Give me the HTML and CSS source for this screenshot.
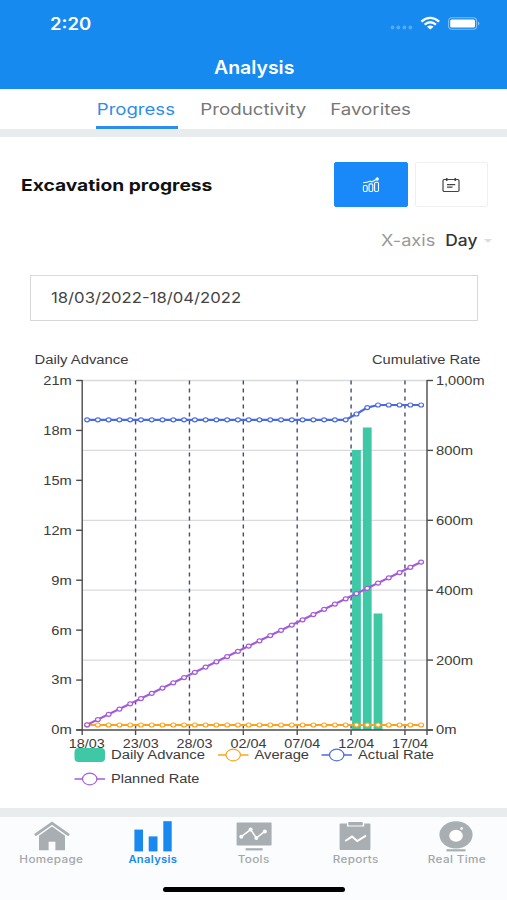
FILE: index.html
```html
<!DOCTYPE html>
<html lang="en">
<head>
  <meta charset="UTF-8" />
  <title>Analysis</title>
  <link rel="stylesheet" href="styles.css">
</head>
<body>

<header>
  <div class="status-bar">
    <span class="time wide">2:20</span>
    <svg class="status-icons" width="92" height="16" viewBox="0 0 92 16">
      <g fill="#fff" opacity=".28">
        <circle cx="3.5" cy="11.5" r="1.9" /><circle cx="9.3" cy="11.5" r="1.9" /><circle cx="15.4" cy="11.5" r="1.9" /><circle cx="21.3" cy="11.5" r="1.9" />
      </g>
      <g fill="none" stroke="#fff" stroke-width="2.3">
        <path d="M32.4 5.6Q41 -1.8 50.2 5.6" />
        <path d="M35.6 8.7Q41.3 3.9 47 8.7" />
      </g>
      <path d="M38 10.8Q41.3 8.2 44.6 10.8L41.3 13.6Z" fill="#fff" />
      <rect x="59.6" y="1.8" width="28" height="11.4" rx="3.2" fill="none" stroke="#fff" stroke-width="1.1" opacity=".45" />
      <rect x="61.2" y="3.4" width="24.8" height="8.2" rx="1.6" fill="#fff" />
      <path d="M89 5.5Q92 7.5 89 9.5Z" fill="#fff" opacity=".5" />
    </svg>
  </div>
  <h1><span class="wide">Analysis</span></h1>
</header>

<nav class="tabs">
  <a class="tab progress active"><span class="wide">Progress</span></a>
  <a class="tab productivity"><span class="wide">Productivity</span></a>
  <a class="tab favorites"><span class="wide">Favorites</span></a>
</nav>

<main>
  <div class="panel-head">
    <h2><span class="wide">Excavation progress</span></h2>
    <div class="view-switch">
      <button class="view-btn selected">
        <svg width="18" height="16" viewBox="0 0 18 16" fill="none" stroke="#fff" stroke-width="1.1">
          <rect x="1.4" y="8.5" width="3.8" height="6" rx="1.2" />
          <rect x="7" y="6.9" width="3.8" height="7.6" rx="1.2" />
          <rect x="12.6" y="5.2" width="3.9" height="9.3" rx="1.2" />
          <path d="M1.2 5.8Q5 5.4 8 4.2L10 4.8L15 2" />
          <circle cx="15.2" cy="2" r="1.1" fill="#fff" />
        </svg>
      </button>
      <button class="view-btn">
        <svg width="18" height="16" viewBox="0 0 18 16" fill="none" stroke="#444" stroke-width="1.2">
          <rect x="1" y="2.5" width="16" height="12" rx="1.2" />
          <path d="M4.7 .9V4M13.3 .9V4" stroke-width="1.6" />
          <path d="M5 7.6H13.2M5 10.2H10.5" />
        </svg>
      </button>
    </div>
  </div>

  <div class="axis-select">
    <span class="axis-label wide">X-axis</span>
    <span class="axis-value wide">Day</span>
    <i class="caret"></i>
  </div>

  <div class="date-range"><span class="wide">18/03/2022-18/04/2022</span></div>

  <svg id="chart" class="chart" width="507" height="460" viewBox="0 340 507 460"></svg>
</main>

<footer>
  <a class="nav-item">
    <svg width="38" height="32" viewBox="0 0 38 32">
      <path d="M2 14.2L19 2.2L36 14.2" fill="none" stroke="#a9aeb2" stroke-width="2.8" />
      <path d="M6 14.8L19 5.6L32 14.8V29.2H22.4V20.8H15.6V29.2H6Z" fill="#a9aeb2" />
    </svg>
    <span class="wide">Homepage</span>
  </a>
  <a class="nav-item active">
    <svg width="38" height="32" viewBox="0 0 38 32" fill="#1989f0">
      <rect x="0.4" y="8.6" width="8.6" height="21.8" /><rect x="14.7" y="15.4" width="8.8" height="15" /><rect x="29.3" y="0.2" width="8.4" height="30.2" />
    </svg>
    <span class="wide">Analysis</span>
  </a>
  <a class="nav-item">
    <svg width="38" height="32" viewBox="0 0 38 32">
      <rect x="1.6" y="1.6" width="35" height="23" rx="1" fill="#a9aeb2" />
      <rect x="10.6" y="27.2" width="17" height="2.2" fill="#a9aeb2" />
      <path d="M6.3 15.7L15.6 8.6L21.4 17L29.8 10.4" fill="none" stroke="#fff" stroke-width="1.5" />
      <g fill="#fff"><circle cx="6.3" cy="15.7" r="2" /><circle cx="15.6" cy="8.4" r="2" /><circle cx="21.4" cy="17" r="2" /><circle cx="29.8" cy="10.4" r="2" /></g>
    </svg>
    <span class="wide">Tools</span>
  </a>
  <a class="nav-item">
    <svg width="38" height="32" viewBox="0 0 38 32">
      <path d="M4.8 2.4H11V5.6H28.2V2.4H33.2Q34.4 2.4 34.4 3.4V28Q34.4 29 33.2 29H4.8Q3.6 29 3.6 28V3.4Q3.6 2.4 4.8 2.4Z" fill="#a9aeb2" />
      <rect x="12.2" y="1" width="14.6" height="3.4" rx=".8" fill="#a9aeb2" />
      <path d="M9.2 20L16 15.6L21.2 20L30 14.6" fill="none" stroke="#fff" stroke-width="2" />
    </svg>
    <span class="wide">Reports</span>
  </a>
  <a class="nav-item">
    <svg width="38" height="32" viewBox="0 0 38 32">
      <ellipse cx="19" cy="13.8" rx="16.6" ry="13.6" fill="#a9aeb2" />
      <ellipse cx="19" cy="14.8" rx="6.8" ry="6" fill="#fff" />
      <circle cx="24.6" cy="7.4" r="1.3" fill="#fff" />
      <rect x="9.5" y="28.2" width="19" height="2.2" fill="#a9aeb2" />
    </svg>
    <span class="wide">Real Time</span>
  </a>
  <div class="home-bar"></div>
</footer>

<script>
  const LEFT = 82.2, RIGHT = 427, TOP = 380.5, BOTTOM = 730;
  const DAYS = 32;
  const step = (RIGHT - LEFT) / DAYS;
  const px = i => LEFT + step * (i + 0.5) - 0.5;
  let out = '';

  function line(x1, y1, x2, y2, cls) {
    out += `<line x1="${x1}" y1="${y1}" x2="${x2}" y2="${y2}" class="${cls}" />`;
  }

  function label(str, x, y, width, anchor = 'start') {
    out += `<text x="${x}" y="${y}" text-anchor="${anchor}" textLength="${width}" lengthAdjust="spacingAndGlyphs">${str}</text>`;
  }

  function series(points, cls) {
    out += `<polyline points="${points.map(p => p.join()).join(' ')}" class="line ${cls}" />`;
    points.forEach(p => out += `<ellipse cx="${p[0]}" cy="${p[1]}" rx="2.4" ry="2" class="dot ${cls}" />`);
  }

  // grid
  for (let v = 200; v <= 1000; v += 200) {
    const y = BOTTOM - (BOTTOM - TOP) * v / 1000;
    line(LEFT, y, RIGHT, y, 'grid');
  }
  for (let i = 5; i < DAYS; i += 5) {
    line(LEFT + step * i - .5, TOP, LEFT + step * i - .5, BOTTOM, 'split');
  }

  // bars
  [[25, 450], [26, 427.5], [27, 613.5]].forEach(([i, y]) => {
    out += `<rect x="${px(i) - 4.4}" y="${y}" width="8.8" height="${BOTTOM - y}" class="bar" />`;
  });

  // axes
  line(LEFT, TOP - .5, LEFT, BOTTOM + 5, 'axis');
  line(RIGHT, TOP - .5, RIGHT, BOTTOM + 5, 'axis');
  line(LEFT - 6, BOTTOM, RIGHT + 6, BOTTOM, 'axis');
  for (let v = 0; v <= 21; v += 3) {
    const y = BOTTOM - (BOTTOM - TOP) * v / 21;
    line(LEFT - 6, y, LEFT, y, 'axis');
    label(v + 'm', 71.8, y + 4.4, v < 10 ? 20.5 : 28.5, 'end');
  }
  [['0m', 20.5], ['200m', 37], ['400m', 37], ['600m', 37], ['800m', 37], ['1,000m', 48.5]].forEach(([t, w], k) => {
    const y = BOTTOM - (BOTTOM - TOP) * k / 5;
    line(RIGHT, y, RIGHT + 6, y, 'axis');
    label(t, 436, y + 4.4, w);
  });
  ['18/03', '23/03', '28/03', '02/04', '07/04', '12/04', '17/04'].forEach((t, k) => {
    if (k) line(LEFT + step * k * 5 - .5, BOTTOM, LEFT + step * k * 5 - .5, BOTTOM + 5, 'axis');
    label(t, px(k * 5) - .2, 748, 36, 'middle');
  });
  label('Daily Advance', 34.5, 364, 94);
  label('Cumulative Rate', 372, 364, 108.5);

  // lines
  const rate = { 25: 414, 26: 407.6 };
  const days = [...Array(DAYS).keys()];
  series(days.map(i => [px(i), 725]), 'average');
  series(days.map(i => [px(i), i < 25 ? 419.8 : rate[i] || 405]), 'actual');
  series(days.map(i => [px(i), 724.8 - 5.25 * i]), 'planned');

  // legend
  out += '<rect x="74.5" y="748" width="30.5" height="14" rx="4" class="bar" />';
  label('Daily Advance', 111, 759.4, 94);
  [['Average', 'average', 218, 755, 54.5], ['Actual Rate', 'actual', 321.5, 755, 76], ['Planned Rate', 'planned', 74.5, 779, 88.5]].forEach(([t, cls, x, y, w]) => {
    line(x, y, x + 30.5, y, 'line legend-line ' + cls);
    out += `<ellipse cx="${x + 15.2}" cy="${y}" rx="7.2" ry="5.8" class="dot ${cls}" />`;
    label(t, x + 36.5, y + 4.4, w);
  });

  document.getElementById('chart').innerHTML = out;
</script>

</body>
</html>
```
FILE: styles.css
```css
body {
  font-family: Inter, 'Liberation Sans', sans-serif;
  margin: 0;
  width: 507px;
  height: 900px;
  overflow: hidden;
  background-color: #fff;
  display: flex;
  flex-direction: column;
}

.wide {
  display: inline-block;
  white-space: nowrap;
  transform: scaleX(1.17);
}

header {
  background-color: #178af0;
  color: white;
  height: 89px;
}

.status-bar {
  display: flex;
  justify-content: space-between;
  align-items: center;
  height: 47px;
  padding: 0 26px 0 50px;
}

.time {
  font-size: 17px;
  font-weight: 600;
  transform: scaleX(1.09);
  transform-origin: left;
}

h1 {
  margin: 0;
  padding-left: 1px;
  font-size: 18px;
  line-height: 41px;
  font-weight: 600;
  text-align: center;
}

h1 .wide {
  transform: scaleX(1.08);
}

.tabs {
  display: flex;
  gap: 21px;
  height: 40px;
  padding-left: 96px;
  border-bottom: 8px solid #e9ecec;
}

.tab {
  box-sizing: border-box;
  height: 40px;
  font-size: 16px;
  line-height: 40px;
  text-align: center;
  color: #777;
}

.progress {
  width: 82px;
}

.progress .wide {
  transform: translateX(-0.8px) scaleX(1.16);
}

.productivity {
  width: 109px;
}

.favorites {
  width: 84px;
}

.tab.active {
  color: #2b8eec;
  border-bottom: 3px solid #2b8eec;
}

main {
  display: flex;
  flex-direction: column;
  height: 671px;
}

.panel-head {
  display: flex;
  justify-content: space-between;
  align-items: center;
  margin-top: 25px;
  padding: 0 19px 0 20.5px;
}

h2 {
  margin: 0;
  font-size: 16px;
  font-weight: 700;
  color: #111;
}

h2 .wide {
  transform: scaleX(1.2);
  transform-origin: left;
}

.view-switch {
  display: flex;
  gap: 7px;
}

.view-btn {
  display: flex;
  align-items: center;
  justify-content: center;
  width: 73.5px;
  height: 45px;
  padding: 0;
  border: 1px solid #eeeff0;
  border-radius: 2px;
  background-color: #fff;
}

.view-btn.selected {
  background-color: #1989fa;
  border-color: #1989fa;
}

.axis-select {
  display: flex;
  align-items: center;
  justify-content: flex-end;
  height: 67px;
  padding-right: 15px;
  font-size: 15.5px;
}

.axis-label {
  color: #999;
  margin-right: 16.5px;
}

.axis-value {
  font-weight: 500;
  color: #333;
  margin-right: 8px;
  transform: scaleX(1.12);
}

.caret {
  border: 4px solid transparent;
  border-top-color: #ddd;
  border-bottom: 0;
}

.date-range {
  box-sizing: border-box;
  height: 46px;
  margin: 1px 29px 0 30px;
  padding-left: 20px;
  border: 1.5px solid #d8d8d8;
  font-size: 14.5px;
  line-height: 44px;
  color: #444;
}

.date-range .wide {
  transform: scaleX(1.15);
  transform-origin: left;
}

.chart {
  display: block;
  margin-top: 19px;
  font-family: 'Liberation Sans', Arial, sans-serif;
  font-size: 12.5px;
}

.chart text {
  fill: #3c3c3c;
}

.grid {
  stroke: #d9dadd;
  stroke-width: 1.3;
}

.split {
  stroke: #474b73;
  stroke-width: 1.4;
  stroke-dasharray: 4 4;
}

.axis {
  stroke: #4c4c4c;
  stroke-width: 1.4;
}

.bar {
  fill: #3ec8a6;
}

.line {
  fill: none;
  stroke-width: 2.2;
}

.legend-line {
  stroke-width: 1.5;
}

.dot {
  fill: #fff;
  stroke-width: 1.2;
}

.average {
  stroke: #faa41c;
}

.actual {
  stroke: #4b6ae0;
}

.planned {
  stroke: #a45bdb;
}

footer {
  position: relative;
  box-sizing: border-box;
  display: grid;
  grid-template-columns: repeat(5, 101.2px);
  height: 92px;
  padding-left: 1px;
  border-top: 9px solid #e9ecec;
  background-color: #fafcfe;
}

.nav-item {
  display: flex;
  flex-direction: column;
  align-items: center;
  padding-top: 3.5px;
  font-size: 10px;
  line-height: 12px;
  font-weight: 500;
  letter-spacing: .3px;
  color: #a3a7aa;
}

.nav-item.active {
  color: #1989f0;
  font-weight: 600;
}

.nav-item.active .wide {
  transform: scaleX(1.12);
}

.home-bar {
  position: absolute;
  left: 163px;
  bottom: 8px;
  width: 182px;
  height: 5px;
  border-radius: 3px;
  background-color: #000;
}
```
